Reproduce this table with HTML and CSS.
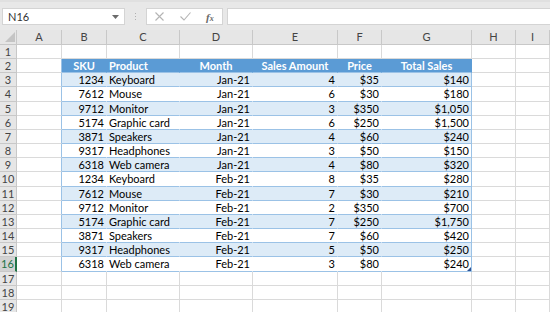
FILE: index.html
```html
<!DOCTYPE html>
<html lang="en">
<head>
    <meta charset="UTF-8">
    <title>Sales sheet</title>
    <link rel="stylesheet" href="styles.css">
</head>
<body>
    <div class="toolbar">
        <div class="namebox">
            <span>N16</span>
            <svg class="drop" width="7" height="4" viewBox="0 0 7 4"><path d="M0 0h7L3.5 4z" fill="#6b6b6b"/></svg>
        </div>
        <div class="grip"><i></i><i></i><i></i></div>
        <div class="fxbox">
            <svg class="cancel" width="9" height="9" viewBox="0 0 9 9"><path d="M0.5 0.5l8 8M8.5 0.5l-8 8" stroke="#b4b4b4" stroke-width="1.1" fill="none"/></svg>
            <svg class="enter" width="11" height="9" viewBox="0 0 11 9"><path d="M0.5 4.5l3.5 3.5L10.5 0.5" stroke="#b4b4b4" stroke-width="1.1" fill="none"/></svg>
            <span class="fx">f<small>x</small></span>
        </div>
        <div class="formula"></div>
    </div>

    <div class="sheet">
        <div class="row colhead">
            <div class="corner"><svg width="10" height="10" viewBox="0 0 10 10"><path d="M10 0v10H0z" fill="#c4c4c4"/></svg></div>
            <div class="ch">A</div><div class="ch">B</div><div class="ch">C</div><div class="ch">D</div>
            <div class="ch">E</div><div class="ch">F</div><div class="ch">G</div><div class="ch">H</div><div class="ch">I</div>
        </div>
        <div class="row">
            <div class="rh">1</div><div class="c"></div><div class="c"></div><div class="c"></div><div class="c"></div>
            <div class="c"></div><div class="c"></div><div class="c"></div><div class="c"></div><div class="c"></div>
        </div>
        <div class="row thead">
            <div class="rh">2</div><div class="c edge"></div>
            <div class="c t">SKU</div><div class="c t left">Product</div><div class="c t">Month</div>
            <div class="c t">Sales Amount</div><div class="c t">Price</div><div class="c t last">Total Sales</div>
            <div class="c"></div><div class="c"></div>
        </div>
        <div class="row band">
            <div class="rh">3</div><div class="c edge"></div>
            <div class="c t r">1234</div><div class="c t">Keyboard</div><div class="c t r">Jan-21</div>
            <div class="c t r">4</div><div class="c t r">$35</div><div class="c t r last">$140</div>
            <div class="c"></div><div class="c"></div>
        </div>
        <div class="row">
            <div class="rh">4</div><div class="c edge"></div>
            <div class="c t r">7612</div><div class="c t">Mouse</div><div class="c t r">Jan-21</div>
            <div class="c t r">6</div><div class="c t r">$30</div><div class="c t r last">$180</div>
            <div class="c"></div><div class="c"></div>
        </div>
        <div class="row band">
            <div class="rh">5</div><div class="c edge"></div>
            <div class="c t r">9712</div><div class="c t">Monitor</div><div class="c t r">Jan-21</div>
            <div class="c t r">3</div><div class="c t r">$350</div><div class="c t r last">$1,050</div>
            <div class="c"></div><div class="c"></div>
        </div>
        <div class="row">
            <div class="rh">6</div><div class="c edge"></div>
            <div class="c t r">5174</div><div class="c t">Graphic card</div><div class="c t r">Jan-21</div>
            <div class="c t r">6</div><div class="c t r">$250</div><div class="c t r last">$1,500</div>
            <div class="c"></div><div class="c"></div>
        </div>
        <div class="row band">
            <div class="rh">7</div><div class="c edge"></div>
            <div class="c t r">3871</div><div class="c t">Speakers</div><div class="c t r">Jan-21</div>
            <div class="c t r">4</div><div class="c t r">$60</div><div class="c t r last">$240</div>
            <div class="c"></div><div class="c"></div>
        </div>
        <div class="row">
            <div class="rh">8</div><div class="c edge"></div>
            <div class="c t r">9317</div><div class="c t">Headphones</div><div class="c t r">Jan-21</div>
            <div class="c t r">3</div><div class="c t r">$50</div><div class="c t r last">$150</div>
            <div class="c"></div><div class="c"></div>
        </div>
        <div class="row band">
            <div class="rh">9</div><div class="c edge"></div>
            <div class="c t r">6318</div><div class="c t">Web camera</div><div class="c t r">Jan-21</div>
            <div class="c t r">4</div><div class="c t r">$80</div><div class="c t r last">$320</div>
            <div class="c"></div><div class="c"></div>
        </div>
        <div class="row">
            <div class="rh">10</div><div class="c edge"></div>
            <div class="c t r">1234</div><div class="c t">Keyboard</div><div class="c t r">Feb-21</div>
            <div class="c t r">8</div><div class="c t r">$35</div><div class="c t r last">$280</div>
            <div class="c"></div><div class="c"></div>
        </div>
        <div class="row band">
            <div class="rh">11</div><div class="c edge"></div>
            <div class="c t r">7612</div><div class="c t">Mouse</div><div class="c t r">Feb-21</div>
            <div class="c t r">7</div><div class="c t r">$30</div><div class="c t r last">$210</div>
            <div class="c"></div><div class="c"></div>
        </div>
        <div class="row">
            <div class="rh">12</div><div class="c edge"></div>
            <div class="c t r">9712</div><div class="c t">Monitor</div><div class="c t r">Feb-21</div>
            <div class="c t r">2</div><div class="c t r">$350</div><div class="c t r last">$700</div>
            <div class="c"></div><div class="c"></div>
        </div>
        <div class="row band">
            <div class="rh">13</div><div class="c edge"></div>
            <div class="c t r">5174</div><div class="c t">Graphic card</div><div class="c t r">Feb-21</div>
            <div class="c t r">7</div><div class="c t r">$250</div><div class="c t r last">$1,750</div>
            <div class="c"></div><div class="c"></div>
        </div>
        <div class="row">
            <div class="rh">14</div><div class="c edge"></div>
            <div class="c t r">3871</div><div class="c t">Speakers</div><div class="c t r">Feb-21</div>
            <div class="c t r">7</div><div class="c t r">$60</div><div class="c t r last">$420</div>
            <div class="c"></div><div class="c"></div>
        </div>
        <div class="row band">
            <div class="rh">15</div><div class="c edge"></div>
            <div class="c t r">9317</div><div class="c t">Headphones</div><div class="c t r">Feb-21</div>
            <div class="c t r">5</div><div class="c t r">$50</div><div class="c t r last">$250</div>
            <div class="c"></div><div class="c"></div>
        </div>
        <div class="row">
            <div class="rh active">16</div><div class="c edge"></div>
            <div class="c t r">6318</div><div class="c t">Web camera</div><div class="c t r">Feb-21</div>
            <div class="c t r">3</div><div class="c t r">$80</div><div class="c t r last">$240<span class="handle"></span></div>
            <div class="c"></div><div class="c"></div>
        </div>
        <div class="row">
            <div class="rh">17</div><div class="c"></div><div class="c"></div><div class="c"></div><div class="c"></div>
            <div class="c"></div><div class="c"></div><div class="c"></div><div class="c"></div><div class="c"></div>
        </div>
        <div class="row">
            <div class="rh">18</div><div class="c"></div><div class="c"></div><div class="c"></div><div class="c"></div>
            <div class="c"></div><div class="c"></div><div class="c"></div><div class="c"></div><div class="c"></div>
        </div>
        <div class="row">
            <div class="rh">19</div><div class="c"></div><div class="c"></div><div class="c"></div><div class="c"></div>
            <div class="c"></div><div class="c"></div><div class="c"></div><div class="c"></div><div class="c"></div>
        </div>
    </div>
</body>
</html>
```

FILE: styles.css
```css
body {
    margin: 0;
    width: 550px;
    height: 312px;
    overflow: hidden;
    font-family: Lato, "Liberation Sans", sans-serif;
    font-size: 11px;
    color: #000;
    background-color: #fff;
}
.toolbar {
    display: flex;
    align-items: center;
    height: 30px;
    padding: 0 0 0 2px;
    box-sizing: border-box;
    background-color: #e8e8e8;
    border-top: 2px solid #e0e0e0;
}
.namebox {
    display: flex;
    align-items: center;
    justify-content: space-between;
    width: 123px;
    height: 17px;
    margin-top: 1px;
    padding: 0 5px 0 5px;
    box-sizing: border-box;
    background-color: #fff;
    border: 1px solid #d4d4d4;
    color: #333;
}
.grip {
    display: flex;
    flex-direction: column;
    gap: 2px;
    margin: 1px 10px 0 10px;
}
.grip i {
    display: block;
    width: 1px;
    height: 1px;
    background-color: #b0b0b0;
}
.fxbox {
    display: flex;
    align-items: center;
    width: 77px;
    height: 17px;
    margin-top: 1px;
    padding: 0 0 0 8px;
    box-sizing: border-box;
    background-color: #fff;
    border: 1px solid #d4d4d4;
}
.enter {
    margin-left: 16px;
}
.fx {
    margin-left: 15px;
    font-family: "Liberation Serif", serif;
    font-style: italic;
    font-weight: bold;
    font-size: 11px;
    color: #6a6a6a;
}
.fx small {
    font-size: 8px;
}
.formula {
    flex: 1;
    height: 17px;
    margin: 1px 0 0 4px;
    background-color: #fff;
    border: 1px solid #d4d4d4;
    border-right: none;
    box-sizing: border-box;
}
.sheet {
    display: grid;
    grid-template-columns: 17px 45px 45px 73px 73px 85px 44px 90px 44px 1fr;
    grid-template-rows: 15px;
    grid-auto-rows: 14.17px;
}
.row {
    display: contents;
}
.c, .rh, .ch, .corner {
    box-sizing: border-box;
    border-right: 1px solid #dadada;
    border-bottom: 1px solid #dadada;
    line-height: 13px;
    white-space: nowrap;
    overflow: hidden;
    padding: 0 2px;
}
.corner, .ch, .rh {
    background-color: #e6e6e6;
    color: #444;
    border-color: #c8c8c8;
}
.corner {
    display: flex;
    align-items: flex-end;
    justify-content: flex-end;
    padding: 0 1px 2px 0;
}
.ch {
    text-align: center;
    line-height: 14px;
}
.rh {
    text-align: center;
    padding: 0;
}
.rh.active {
    background-color: #d2d2d2;
    color: #217346;
    border-right: 2px solid #217346;
}
.r {
    text-align: right;
}
.t {
    border-right-color: transparent;
    border-bottom-color: #9bc2e6;
}
.t.last, .edge {
    border-right-color: #9bc2e6;
}
.band .t {
    background-color: #ddebf7;
}
.thead .t {
    background-color: #5b9bd5;
    color: #fff;
    font-weight: bold;
    text-align: center;
    border-right-color: #5b9bd5;
}
.thead .t.left {
    text-align: left;
}
.last {
    position: relative;
}
.handle {
    position: absolute;
    right: 0;
    bottom: 0;
    width: 0;
    height: 0;
    border-left: 4px solid transparent;
    border-bottom: 4px solid #2f5597;
}
```
